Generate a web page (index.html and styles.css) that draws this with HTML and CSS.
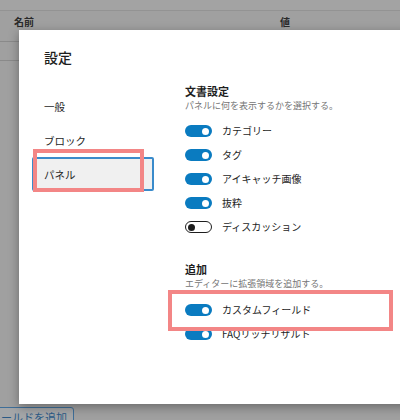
FILE: index.html
```html
<!DOCTYPE html>
<html lang="ja">
<head>
<meta charset="utf-8">
<link rel="stylesheet" href="styles.css">
</head>
<body>
<div class="page">
  <div class="topband"></div>
  <div class="thead">
    <span class="th th-name">名前</span>
    <span class="th th-val">値</span>
  </div>
  <div class="trow"></div>
  <div class="spacer"></div>
  <button class="addbtn">ールドを追加</button>
</div>

<div class="modal">
  <h1 class="title">設定</h1>
  <div class="body">
    <nav class="nav">
      <div class="nav-item">一般</div>
      <div class="nav-item">ブロック</div>
      <div class="nav-item is-active">パネル</div>
    </nav>
    <div class="content">
      <section class="section">
        <h2 class="sec-title">文書設定</h2>
        <p class="sec-desc">パネルに何を表示するかを選択する。</p>
        <div class="rows">
          <div class="row"><span class="toggle on"></span><span class="label">カテゴリー</span></div>
          <div class="row"><span class="toggle on"></span><span class="label">タグ</span></div>
          <div class="row"><span class="toggle on"></span><span class="label">アイキャッチ画像</span></div>
          <div class="row"><span class="toggle on"></span><span class="label">抜粋</span></div>
          <div class="row"><span class="toggle off"></span><span class="label">ディスカッション</span></div>
        </div>
      </section>
      <section class="section section-2">
        <h2 class="sec-title">追加</h2>
        <p class="sec-desc">エディターに拡張領域を追加する。</p>
        <div class="rows">
          <div class="row"><span class="toggle on"></span><span class="label">カスタムフィールド</span></div>
          <div class="row"><span class="toggle on"></span><span class="label">FAQリッチリザルト</span></div>
        </div>
      </section>
    </div>
  </div>
</div>

<div class="mark mark-nav"></div>
<div class="mark mark-field"></div>
</body>
</html>
```

FILE: styles.css
```css
html, body {
  margin: 0;
  padding: 0;
  width: 400px;
  height: 420px;
  overflow: hidden;
  background: #a0a0a0;
  font-family: "Noto Sans CJK JP", "Noto Sans", sans-serif;
}

.page {
  height: 420px;
  display: flex;
  flex-direction: column;
  background: #a0a0a0;
}

.topband {
  height: 10px;
  border-bottom: 1px solid #939393;
  background: #a3a3a3;
}

.thead {
  height: 31px;
  display: flex;
  align-items: flex-start;
  padding-top: 4px;
  box-sizing: border-box;
  border-bottom: 1px solid #8a8a8a;
}

.th {
  font-size: 10px;
  font-weight: 700;
  color: #2a2a2a;
  line-height: 14px;
}

.th-name {
  margin-left: 14px;
}

.th-val {
  margin-left: 246px;
}

.trow {
  height: 18px;
  border-bottom: 1px solid #8a8a8a;
}

.spacer {
  flex: 1;
}

.addbtn {
  align-self: flex-start;
  margin: 0 0 -7px -6px;
  height: 20px;
  padding: 0 6px;
  border: 1px solid #3f6e98;
  border-radius: 3px;
  background: #a4a6a8;
  color: #2b5a86;
  font-family: "Noto Sans CJK JP", sans-serif;
  font-size: 11px;
  line-height: 16px;
  text-align: left;
}

.modal {
  position: absolute;
  left: 19px;
  top: 30px;
  width: 400px;
  height: 374px;
  background: #ffffff;
  box-shadow: 0 3px 10px rgba(0, 0, 0, 0.35);
  padding-top: 17px;
  box-sizing: border-box;
}

.title {
  margin: 0 0 0 25px;
  font-size: 14px;
  line-height: 20px;
  font-weight: 500;
  color: #1e1e1e;
}

.body {
  display: flex;
  margin-top: 16px;
}

.nav {
  width: 122px;
  margin-left: 13px;
  margin-top: 6px;
  display: flex;
  flex-direction: column;
}

.nav-item {
  height: 34px;
  display: flex;
  align-items: center;
  padding-left: 12px;
  font-size: 10.5px;
  color: #1e1e1e;
  box-sizing: border-box;
}

.nav-item.is-active {
  background: #f0f0f0;
  border: 2px solid #3a8bcb;
  border-radius: 2px;
  padding-left: 10px;
}

.content {
  margin-left: 31px;
  display: flex;
  flex-direction: column;
}

.sec-title {
  margin: 0;
  font-size: 11px;
  line-height: 16px;
  font-weight: 700;
  color: #1e1e1e;
}

.sec-desc {
  margin: 0;
  font-size: 9px;
  line-height: 14px;
  color: #757575;
}

.rows {
  margin-top: 6px;
  display: flex;
  flex-direction: column;
}

.row {
  height: 24px;
  display: flex;
  align-items: center;
}

.section-2 {
  margin-top: 22px;
}

.section-2 .rows {
  margin-top: 7px;
}

.toggle {
  position: relative;
  width: 27px;
  height: 12px;
  border-radius: 7px;
  box-sizing: border-box;
  flex: none;
}

.toggle::after {
  content: "";
  position: absolute;
  top: 50%;
  width: 7px;
  height: 7px;
  margin-top: -3.5px;
  border-radius: 50%;
}

.toggle.on {
  background: #0a7bc0;
}

.toggle.on::after {
  right: 3px;
  background: #ffffff;
}

.toggle.off {
  background: #ffffff;
  border: 1px solid #1e1e1e;
}

.toggle.off::after {
  left: 2px;
  background: #1e1e1e;
}

.label {
  margin-left: 10px;
  font-size: 10px;
  line-height: 14px;
  color: #1e1e1e;
}

.mark {
  position: absolute;
  border: 4.5px solid #f38686;
  box-sizing: border-box;
}

.mark-nav {
  left: 33px;
  top: 149px;
  width: 111px;
  height: 43px;
}

.mark-field {
  left: 168px;
  top: 290px;
  width: 225px;
  height: 41px;
}
```
